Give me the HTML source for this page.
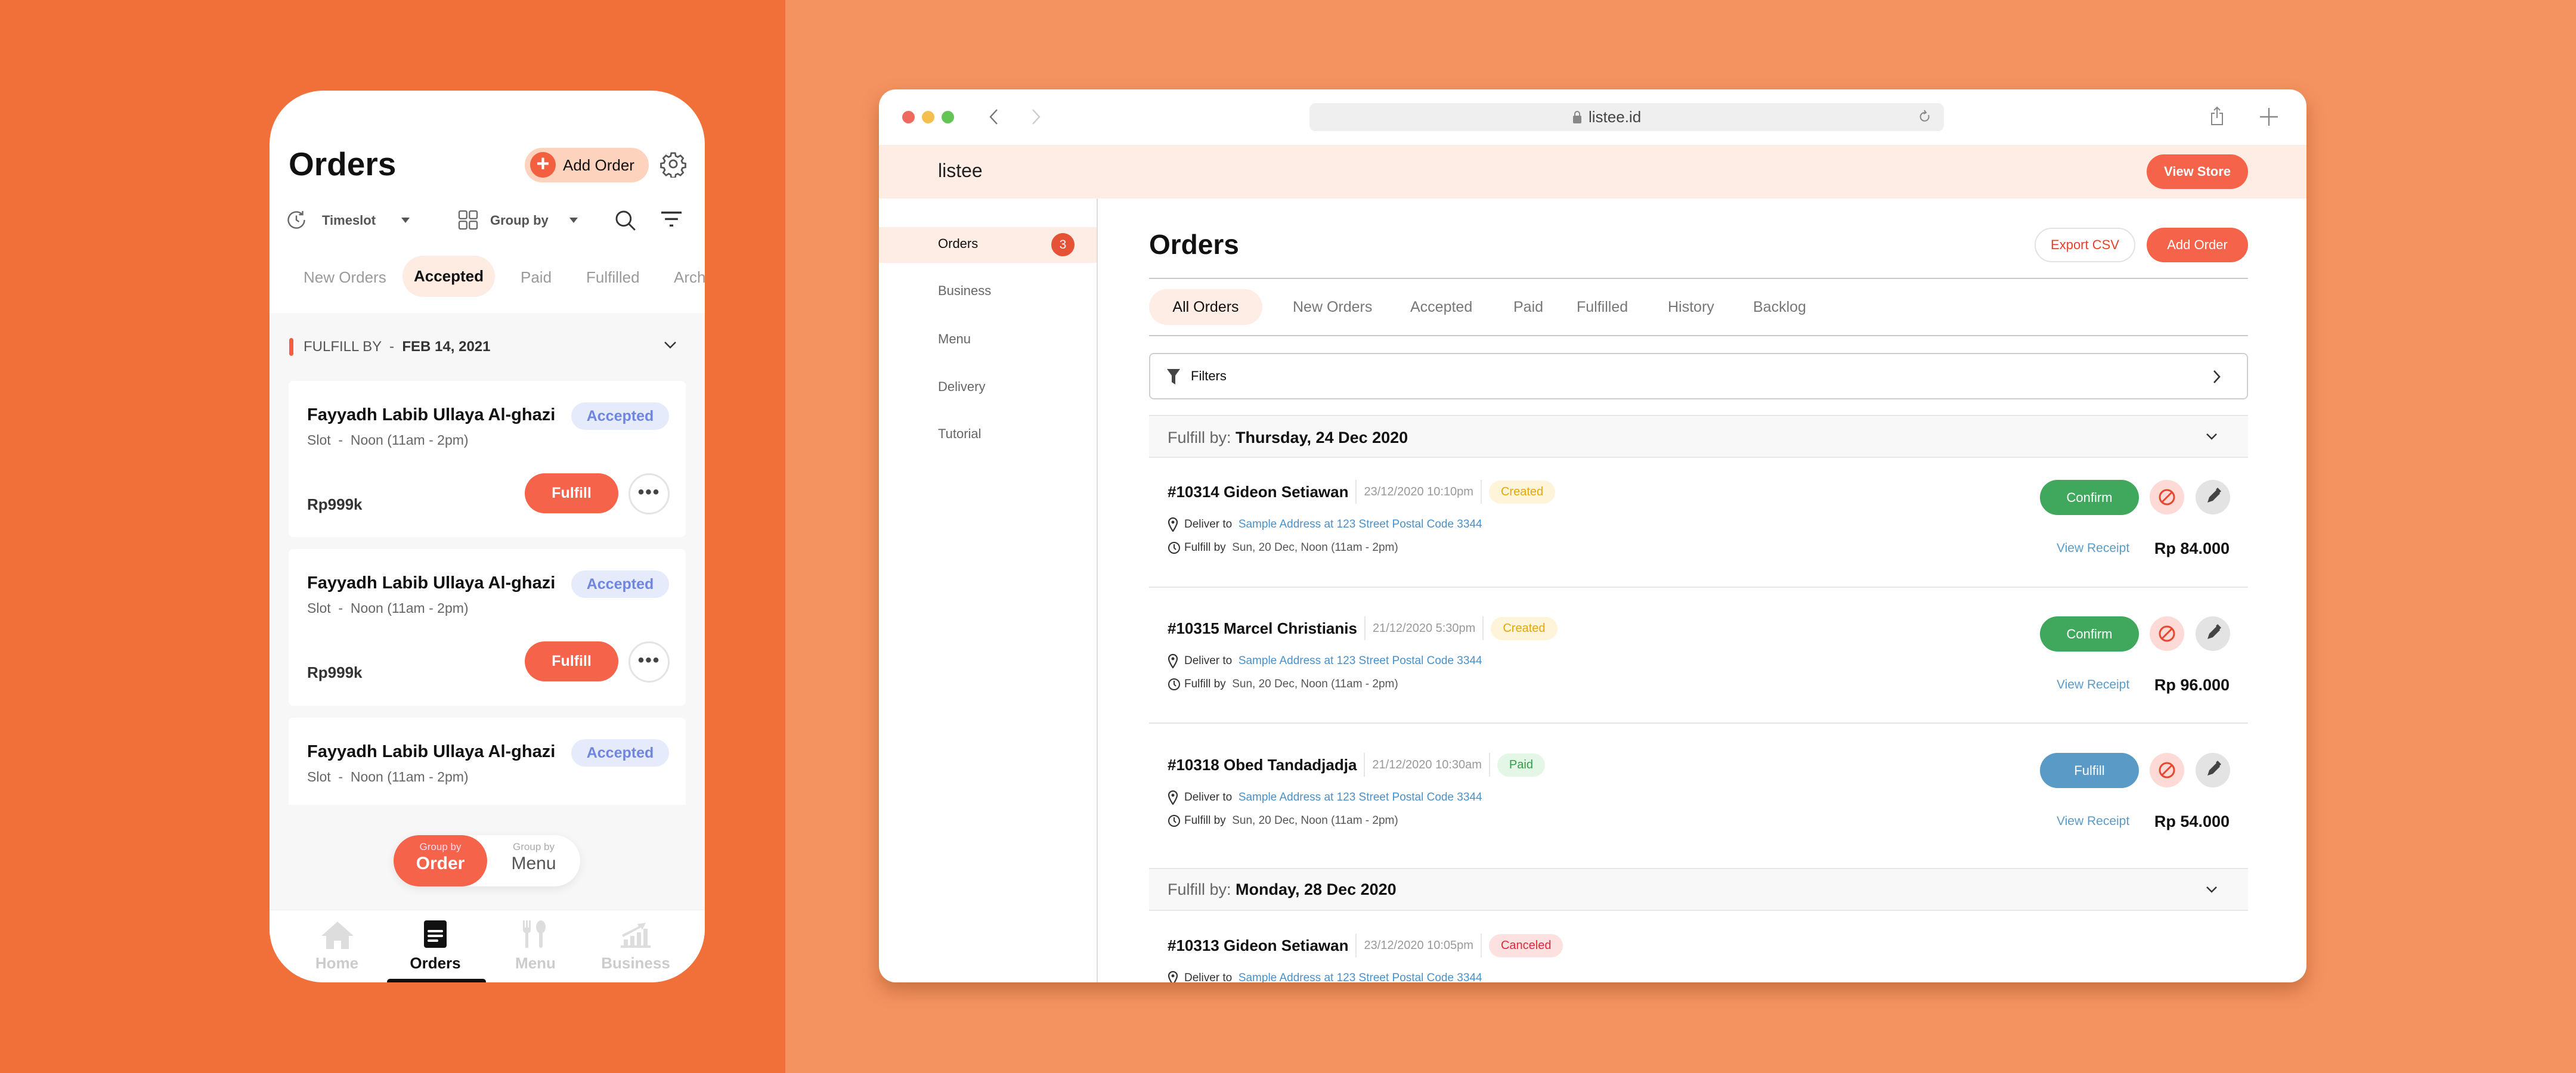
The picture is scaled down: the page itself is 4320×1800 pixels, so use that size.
<!DOCTYPE html>
<html><head><meta charset="utf-8"><style>
*{box-sizing:border-box;margin:0;padding:0}
body{width:4320px;height:1800px;position:relative;overflow:hidden;font-family:"Liberation Sans",sans-serif;background:#F49360}
.a{position:absolute}
.t{position:absolute;white-space:nowrap}
#left{left:0;top:0;width:1317px;height:1800px;background:#F1703A}
#phone{left:452px;top:152px;width:730px;height:1496px;border-radius:90px;background:#fff;overflow:hidden}
.card{position:absolute;left:32px;width:666px;background:#fff;border-radius:8px}
.badgeA{position:absolute;left:474px;top:36px;width:164px;height:46px;border-radius:23px;background:#E6EBFC;color:#6E86E0;font-size:25px;font-weight:600;text-align:center;line-height:46px}
.ful{position:absolute;left:396px;top:155px;width:157px;height:67px;border-radius:34px;background:#F4634A;color:#fff;font-size:25px;font-weight:700;text-align:center;line-height:67px}
.more{position:absolute;left:570px;top:155px;width:69px;height:69px;border-radius:50%;border:3px solid #e4e4e4;text-align:center;line-height:58px;font-size:30px;color:#444;letter-spacing:2px;font-weight:700}
#win{left:1474px;top:150px;width:2394px;height:1498px;border-radius:28px;background:#fff;overflow:hidden;box-shadow:0 14px 30px rgba(120,50,10,.35)}
.side{font-size:22px;color:#666;left:99px}
.tab{font-size:25px;color:#777;top:350px;line-height:30px}
.btnR{position:absolute;height:58px;border-radius:29px;background:#F4634A;color:#fff;font-size:22px;font-weight:600;text-align:center;line-height:58px}
.ord{position:absolute;left:453px;width:1843px}
.row{position:absolute;left:31px;display:flex;align-items:center;white-space:nowrap}
.ti{font-size:26px;font-weight:700;color:#111}
.dt{font-size:20px;color:#999;border-left:2px solid #e6e6e6;border-right:2px solid #e6e6e6;padding:0 12px;margin:0 12px;line-height:40px}
.bd{font-size:20px;padding:0 20px;height:39px;line-height:39px;border-radius:20px}
.sm{font-size:19px;color:#333}
.sm b{font-weight:400;color:#555}
.ad{color:#4A90C8}
.cbtn{position:absolute;left:1494px;width:166px;height:59px;border-radius:30px;color:#fff;font-size:22px;text-align:center;line-height:59px}
.cx{position:absolute;left:1678px;width:58px;height:58px;border-radius:50%;background:#FDDAD5}
.ed{position:absolute;left:1755px;width:58px;height:58px;border-radius:50%;background:#E3E3E3}
.vr{position:absolute;left:1522px;font-size:21px;color:#5B9BC8}
.pr{position:absolute;font-size:27px;font-weight:700;color:#111}
.gh{position:absolute;left:453px;width:1843px;height:72px;background:#F8F8F8;border-top:2px solid #e6e6e6;border-bottom:2px solid #e6e6e6}
.nav{position:absolute;top:1464px;transform:translate(-50%,-50%);font-size:26px;font-weight:700;color:#ccc}
</style></head><body>
<div class="a" id="left"></div>

<div class="a" id="phone">
 <div class="t" style="left:32px;top:90px;font-size:55px;font-weight:700;color:#111;line-height:66px">Orders</div>
 <div class="a" style="left:428px;top:96px;width:208px;height:58px;border-radius:29px;background:#FDD3BD"></div>
 <div class="a" style="left:437px;top:103px;width:43px;height:43px;border-radius:50%;background:#F2603F;color:#fff;text-align:center;line-height:41px;font-size:38px;font-weight:700">+</div>
 <div class="t" style="left:492px;top:107px;font-size:26px;color:#111;line-height:36px">Add Order</div>
 <svg class="a" style="left:654px;top:100px" width="46" height="46" viewBox="0 0 24 24" fill="none" stroke="#555" stroke-width="1.4"><circle cx="12" cy="12" r="3.2"/><path d="M10.3 2.5h3.4l.5 2.6 1.8.9 2.3-1.4 2.4 2.4-1.4 2.3.8 1.8 2.6.5v3.4l-2.6.5-.8 1.8 1.4 2.3-2.4 2.4-2.3-1.4-1.8.8-.5 2.6h-3.4l-.5-2.6-1.8-.8-2.3 1.4-2.4-2.4 1.4-2.3-.8-1.8-2.6-.5v-3.4l2.6-.5.8-1.8-1.4-2.3 2.4-2.4 2.3 1.4 1.8-.9z"/></svg>
 <svg class="a" style="left:27px;top:199px" width="36" height="36" viewBox="0 0 24 24" fill="none" stroke="#666" stroke-width="1.6"><path d="M21 12a9 9 0 1 1-3-6.7"/><path d="M19 2v4h-4" /><path d="M12 7v5l3 2"/></svg>
 <div class="t" style="left:88px;top:204px;font-size:22px;font-weight:600;color:#555;line-height:28px">Timeslot</div>
 <div class="a" style="left:221px;top:213px;border-left:7px solid transparent;border-right:7px solid transparent;border-top:9px solid #555"></div>
 <svg class="a" style="left:315px;top:199px" width="36" height="36" viewBox="0 0 24 24" fill="none" stroke="#666" stroke-width="1.5"><rect x="2" y="2" width="8.5" height="8.5" rx="1.5"/><rect x="13.5" y="2" width="8.5" height="8.5" rx="1.5"/><rect x="2" y="13.5" width="8.5" height="8.5" rx="1.5"/><rect x="13.5" y="13.5" width="8.5" height="8.5" rx="1.5"/></svg>
 <div class="t" style="left:370px;top:204px;font-size:22px;font-weight:600;color:#555;line-height:28px">Group by</div>
 <div class="a" style="left:503px;top:213px;border-left:7px solid transparent;border-right:7px solid transparent;border-top:9px solid #555"></div>
 <svg class="a" style="left:578px;top:199px" width="38" height="38" viewBox="0 0 24 24" fill="none" stroke="#333" stroke-width="1.8"><circle cx="10" cy="10" r="7.5"/><path d="M15.5 15.5L22 22"/></svg>
 <svg class="a" style="left:655px;top:200px" width="38" height="34" viewBox="0 0 24 22" fill="none" stroke="#333" stroke-width="2.2"><path d="M1 3h22M5 10h14M10 17h4"/></svg>
 <div class="t" style="left:57px;top:298px;font-size:26px;color:#9a9a9a;line-height:30px">New Orders</div>
 <div class="a" style="left:223px;top:277px;width:155px;height:69px;border-radius:35px;background:#FEEBE1;text-align:center;line-height:69px;font-size:26px;font-weight:700;color:#111">Accepted</div>
 <div class="t" style="left:421px;top:298px;font-size:26px;color:#9a9a9a;line-height:30px">Paid</div>
 <div class="t" style="left:531px;top:298px;font-size:26px;color:#9a9a9a;line-height:30px">Fulfilled</div>
 <div class="t" style="left:678px;top:298px;font-size:26px;color:#9a9a9a;line-height:30px">Archived</div>
 <div class="a" style="left:0;top:373px;width:730px;height:1001px;background:#F7F7F7"></div>
 <div class="a" style="left:33px;top:415px;width:7px;height:30px;border-radius:4px;background:#F2603F"></div>
 <div class="t" style="left:57px;top:416px;font-size:24px;color:#555;line-height:28px">FULFILL BY &nbsp;- &nbsp;<b style="color:#333">FEB 14, 2021</b></div>
 <svg class="a" style="left:661px;top:420px" width="22" height="14" viewBox="0 0 22 14" fill="none" stroke="#333" stroke-width="2.4"><path d="M2 2l9 9 9-9"/></svg>

 <div class="card" style="top:487px;height:262px">
  <div class="t" style="left:31px;top:40px;font-size:29px;font-weight:700;color:#111;line-height:34px">Fayyadh Labib Ullaya Al-ghazi</div>
  <div class="badgeA">Accepted</div>
  <div class="t" style="left:31px;top:85px;font-size:23px;color:#666;line-height:28px">Slot &nbsp;- &nbsp;Noon (11am - 2pm)</div>
  <div class="ful">Fulfill</div><div class="more">•••</div>
  <div class="t" style="left:31px;top:192px;font-size:26px;font-weight:700;color:#333;line-height:30px">Rp999k</div>
 </div>
 <div class="card" style="top:769px;height:263px">
  <div class="t" style="left:31px;top:40px;font-size:29px;font-weight:700;color:#111;line-height:34px">Fayyadh Labib Ullaya Al-ghazi</div>
  <div class="badgeA">Accepted</div>
  <div class="t" style="left:31px;top:85px;font-size:23px;color:#666;line-height:28px">Slot &nbsp;- &nbsp;Noon (11am - 2pm)</div>
  <div class="ful">Fulfill</div><div class="more">•••</div>
  <div class="t" style="left:31px;top:192px;font-size:26px;font-weight:700;color:#333;line-height:30px">Rp999k</div>
 </div>
 <div class="card" style="top:1052px;height:146px;border-radius:8px 8px 0 0">
  <div class="t" style="left:31px;top:40px;font-size:29px;font-weight:700;color:#111;line-height:34px">Fayyadh Labib Ullaya Al-ghazi</div>
  <div class="badgeA">Accepted</div>
  <div class="t" style="left:31px;top:85px;font-size:23px;color:#666;line-height:28px">Slot &nbsp;- &nbsp;Noon (11am - 2pm)</div>
 </div>
 <div class="a" style="left:208px;top:1249px;width:313px;height:86px;border-radius:43px;background:#fff;box-shadow:0 4px 14px rgba(0,0,0,.08)"></div>
 <div class="a" style="left:208px;top:1249px;width:157px;height:86px;border-radius:43px;background:#F4634A;color:#fff;text-align:center">
  <div style="font-size:17px;margin-top:10px;line-height:20px;color:#fde">Group by</div><div style="font-size:30px;line-height:36px;font-weight:600">Order</div></div>
 <div class="a" style="left:365px;top:1249px;width:156px;height:86px;text-align:center;color:#555">
  <div style="font-size:17px;margin-top:10px;line-height:20px;color:#aaa">Group by</div><div style="font-size:30px;line-height:36px">Menu</div></div>
 <div class="a" style="left:0;top:1374px;width:730px;height:122px;background:#fff;border-top:1px solid #eee"></div>
 <svg class="a" style="left:87px;top:1394px" width="54" height="46" viewBox="0 0 54 46" fill="#ddd"><path d="M27 0L54 24H46V46H33V32H21V46H8V24H0Z"/></svg>
 <svg class="a" style="left:259px;top:1392px" width="38" height="46" viewBox="0 0 38 46"><rect width="38" height="46" rx="4" fill="#111"/><path d="M8 18h22M8 26h22M8 34h14" stroke="#fff" stroke-width="4" stroke-linecap="round"/></svg>
 <svg class="a" style="left:424px;top:1392px" width="40" height="46" viewBox="0 0 40 46" fill="#ddd"><path d="M1 0h3v12h2V0h3v12h2V0h3v16c0 3-2 5-4 5v25H5V21c-2 0-4-2-4-5z"/><ellipse cx="31" cy="11" rx="8" ry="11"/><rect x="28" y="18" width="6" height="28" rx="3"/></svg>
 <svg class="a" style="left:589px;top:1392px" width="50" height="46" viewBox="0 0 50 46" fill="#ddd"><rect x="0" y="42" width="50" height="4"/><rect x="5" y="32" width="7" height="10"/><rect x="16" y="26" width="7" height="16"/><rect x="27" y="20" width="7" height="22"/><rect x="38" y="14" width="7" height="28"/><path d="M2 24L30 10l-2-4 14-2-6 12-2-4L4 28z"/></svg>
 <div class="nav" style="left:113px">Home</div>
 <div class="nav" style="left:278px;color:#111">Orders</div>
 <div class="nav" style="left:446px">Menu</div>
 <div class="nav" style="left:614px">Business</div>
 <div class="a" style="left:197px;top:1490px;width:166px;height:10px;border-radius:5px;background:#111"></div>
</div>

<div class="a" id="win">
 <div class="a" style="left:39px;top:36px;width:21px;height:21px;border-radius:50%;background:#EE6A5F"></div>
 <div class="a" style="left:72px;top:36px;width:21px;height:21px;border-radius:50%;background:#F5BE4F"></div>
 <div class="a" style="left:105px;top:36px;width:21px;height:21px;border-radius:50%;background:#62C554"></div>
 <svg class="a" style="left:184px;top:32px" width="16" height="28" viewBox="0 0 16 28" fill="none" stroke="#777" stroke-width="2.4"><path d="M14 2L3 14l11 12"/></svg>
 <svg class="a" style="left:256px;top:32px" width="16" height="28" viewBox="0 0 16 28" fill="none" stroke="#ccc" stroke-width="2.4"><path d="M2 2l11 12L2 26"/></svg>
 <div class="a" style="left:722px;top:23px;width:1064px;height:47px;border-radius:10px;background:#EFEFEF"></div>
 <svg class="a" style="left:1164px;top:35px" width="14" height="22" viewBox="0 0 14 22"><path d="M3 9V6a4 4 0 0 1 8 0v3" fill="none" stroke="#888" stroke-width="2"/><rect x="0" y="9" width="14" height="13" rx="2" fill="#888"/></svg>
 <div class="t" style="left:1190px;top:31px;font-size:26px;color:#444;line-height:30px">listee.id</div>
 <svg class="a" style="left:1744px;top:33px" width="20" height="26" viewBox="0 0 20 26" fill="none" stroke="#888" stroke-width="2"><path d="M16 10a7 7 0 1 1-5-4"/><path d="M9 2l3 4-4 2"/></svg>
 <svg class="a" style="left:2233px;top:28px" width="22" height="32" viewBox="0 0 22 32" fill="none" stroke="#888" stroke-width="2"><path d="M7 12H2v19h18V12h-5M11 20V2M6 7l5-5 5 5"/></svg>
 <svg class="a" style="left:2316px;top:31px" width="30" height="30" viewBox="0 0 30 30" stroke="#888" stroke-width="2.4"><path d="M15 0v30M0 15h30"/></svg>
 <div class="a" style="left:0;top:93px;width:2394px;height:90px;background:#FEEDE4"></div>
 <div class="t" style="left:99px;top:118px;font-size:32px;color:#222;line-height:36px">listee</div>
 <div class="btnR" style="left:2126px;top:109px;width:170px">View Store</div>
 <div class="a" style="left:365px;top:183px;width:2px;height:1315px;background:#ddd"></div>
 <div class="a" style="left:0;top:231px;width:365px;height:60px;background:#FEEDE4"></div>
 <div class="t side" style="top:246px;line-height:26px;color:#111">Orders</div>
 <div class="a" style="left:289px;top:241px;width:39px;height:39px;border-radius:50%;background:#E55337;color:#fff;text-align:center;line-height:39px;font-size:21px">3</div>
 <div class="t side" style="top:325px;line-height:26px">Business</div>
 <div class="t side" style="top:406px;line-height:26px">Menu</div>
 <div class="t side" style="top:486px;line-height:26px">Delivery</div>
 <div class="t side" style="top:565px;line-height:26px">Tutorial</div>
 <div class="t" style="left:453px;top:232px;font-size:46px;font-weight:700;color:#111;line-height:56px">Orders</div>
 <div class="a" style="left:1938px;top:232px;width:169px;height:58px;border-radius:29px;border:2px solid #e2e2e2;color:#E8412A;font-size:22px;text-align:center;line-height:54px">Export CSV</div>
 <div class="btnR" style="left:2126px;top:232px;width:170px;font-weight:400">Add Order</div>
 <div class="a" style="left:453px;top:316px;width:1843px;height:2px;background:#c9c9cd"></div>
 <div class="a" style="left:453px;top:335px;width:190px;height:60px;border-radius:30px;background:#FEEDE4;text-align:center;line-height:60px;font-size:25px;color:#111">All Orders</div>
 <div class="t tab" style="left:694px">New Orders</div>
 <div class="t tab" style="left:891px">Accepted</div>
 <div class="t tab" style="left:1064px">Paid</div>
 <div class="t tab" style="left:1170px">Fulfilled</div>
 <div class="t tab" style="left:1323px">History</div>
 <div class="t tab" style="left:1466px">Backlog</div>
 <div class="a" style="left:453px;top:412px;width:1843px;height:2px;background:#c9c9cd"></div>
 <div class="a" style="left:453px;top:442px;width:1843px;height:78px;border-radius:8px;border:2px solid #cfcfd3"></div>
 <svg class="a" style="left:483px;top:469px" width="22" height="26" viewBox="0 0 22 26" fill="#444"><path d="M0 0h22l-8 11v15l-6-4V11z"/></svg>
 <div class="t" style="left:523px;top:468px;font-size:22px;color:#111;line-height:26px">Filters</div>
 <svg class="a" style="left:2237px;top:470px" width="14" height="24" viewBox="0 0 14 24" fill="none" stroke="#333" stroke-width="2.6"><path d="M2 2l9 10-9 10"/></svg>

 <div class="gh" style="top:546px"><div class="t" style="left:31px;top:20px;font-size:27px;color:#666;line-height:32px">Fulfill by: <b style="color:#111">Thursday, 24 Dec 2020</b></div>
  <svg class="a" style="left:1772px;top:28px" width="20" height="12" viewBox="0 0 20 12" fill="none" stroke="#333" stroke-width="2.4"><path d="M2 2l8 8 8-8"/></svg></div>

 <div class="ord" style="top:655px;height:160px">
  <div class="row" style="top:0;height:40px"><span class="ti">#10314 Gideon Setiawan</span><span class="dt">23/12/2020 10:10pm</span><span class="bd" style="background:#FEF4DA;color:#E8A600">Created</span></div>
  <div class="row sm" style="top:62px;left:31px;height:26px"><svg width="18" height="24" viewBox="0 0 18 24"><path d="M9 1a7 7 0 0 1 7 7c0 5-7 15-7 15S2 13 2 8a7 7 0 0 1 7-7z" fill="#fff" stroke="#333" stroke-width="2.2"/><circle cx="9" cy="8" r="2.5" fill="#333"/></svg><span style="margin-left:10px">Deliver to &nbsp;<span class="ad">Sample Address at 123 Street Postal Code 3344</span></span></div>
  <div class="row sm" style="top:101px;height:26px"><svg width="22" height="22" viewBox="0 0 22 22" fill="none" stroke="#333" stroke-width="2"><circle cx="11" cy="11" r="9"/><path d="M11 5v6l3 3"/></svg><span style="margin-left:6px">Fulfill by &nbsp;<b>Sun, 20 Dec, Noon (11am - 2pm)</b></span></div>
  <div class="cbtn" style="top:0;background:#3FA85C">Confirm</div>
  <div class="cx" style="top:0"><svg width="58" height="58" viewBox="0 0 58 58" fill="none" stroke="#E5482E" stroke-width="3"><circle cx="29" cy="29" r="12"/><path d="M21 37l16-16"/></svg></div>
  <div class="ed" style="top:0"><svg width="58" height="58" viewBox="0 0 58 58"><path d="M20 38l3-9 12-12 6 6-12 12z M34 16l3-3 6 6-3 3z" fill="#444"/></svg></div>
  <div class="vr" style="top:102px;line-height:26px">View Receipt</div>
  <div class="pr" style="top:99px;line-height:32px;left:1650px;text-align:right;width:162px">Rp 84.000</div>
 </div>
 <div class="a" style="left:453px;top:834px;width:1843px;height:2px;background:#e6e6e6"></div>

 <div class="ord" style="top:884px;height:160px">
  <div class="row" style="top:0;height:40px"><span class="ti">#10315 Marcel Christianis</span><span class="dt">21/12/2020 5:30pm</span><span class="bd" style="background:#FEF4DA;color:#E8A600">Created</span></div>
  <div class="row sm" style="top:62px;left:31px;height:26px"><svg width="18" height="24" viewBox="0 0 18 24"><path d="M9 1a7 7 0 0 1 7 7c0 5-7 15-7 15S2 13 2 8a7 7 0 0 1 7-7z" fill="#fff" stroke="#333" stroke-width="2.2"/><circle cx="9" cy="8" r="2.5" fill="#333"/></svg><span style="margin-left:10px">Deliver to &nbsp;<span class="ad">Sample Address at 123 Street Postal Code 3344</span></span></div>
  <div class="row sm" style="top:101px;height:26px"><svg width="22" height="22" viewBox="0 0 22 22" fill="none" stroke="#333" stroke-width="2"><circle cx="11" cy="11" r="9"/><path d="M11 5v6l3 3"/></svg><span style="margin-left:6px">Fulfill by &nbsp;<b>Sun, 20 Dec, Noon (11am - 2pm)</b></span></div>
  <div class="cbtn" style="top:0;background:#3FA85C">Confirm</div>
  <div class="cx" style="top:0"><svg width="58" height="58" viewBox="0 0 58 58" fill="none" stroke="#E5482E" stroke-width="3"><circle cx="29" cy="29" r="12"/><path d="M21 37l16-16"/></svg></div>
  <div class="ed" style="top:0"><svg width="58" height="58" viewBox="0 0 58 58"><path d="M20 38l3-9 12-12 6 6-12 12z M34 16l3-3 6 6-3 3z" fill="#444"/></svg></div>
  <div class="vr" style="top:102px;line-height:26px">View Receipt</div>
  <div class="pr" style="top:99px;line-height:32px;left:1650px;text-align:right;width:162px">Rp 96.000</div>
 </div>
 <div class="a" style="left:453px;top:1062px;width:1843px;height:2px;background:#e6e6e6"></div>

 <div class="ord" style="top:1113px;height:160px">
  <div class="row" style="top:0;height:40px"><span class="ti">#10318 Obed Tandadjadja</span><span class="dt">21/12/2020 10:30am</span><span class="bd" style="background:#E4F7E6;color:#2E9E48">Paid</span></div>
  <div class="row sm" style="top:62px;left:31px;height:26px"><svg width="18" height="24" viewBox="0 0 18 24"><path d="M9 1a7 7 0 0 1 7 7c0 5-7 15-7 15S2 13 2 8a7 7 0 0 1 7-7z" fill="#fff" stroke="#333" stroke-width="2.2"/><circle cx="9" cy="8" r="2.5" fill="#333"/></svg><span style="margin-left:10px">Deliver to &nbsp;<span class="ad">Sample Address at 123 Street Postal Code 3344</span></span></div>
  <div class="row sm" style="top:101px;height:26px"><svg width="22" height="22" viewBox="0 0 22 22" fill="none" stroke="#333" stroke-width="2"><circle cx="11" cy="11" r="9"/><path d="M11 5v6l3 3"/></svg><span style="margin-left:6px">Fulfill by &nbsp;<b>Sun, 20 Dec, Noon (11am - 2pm)</b></span></div>
  <div class="cbtn" style="top:0;background:#5A9AC6">Fulfill</div>
  <div class="cx" style="top:0"><svg width="58" height="58" viewBox="0 0 58 58" fill="none" stroke="#E5482E" stroke-width="3"><circle cx="29" cy="29" r="12"/><path d="M21 37l16-16"/></svg></div>
  <div class="ed" style="top:0"><svg width="58" height="58" viewBox="0 0 58 58"><path d="M20 38l3-9 12-12 6 6-12 12z M34 16l3-3 6 6-3 3z" fill="#444"/></svg></div>
  <div class="vr" style="top:102px;line-height:26px">View Receipt</div>
  <div class="pr" style="top:99px;line-height:32px;left:1650px;text-align:right;width:162px">Rp 54.000</div>
 </div>

 <div class="gh" style="top:1306px"><div class="t" style="left:31px;top:18px;font-size:27px;color:#666;line-height:32px">Fulfill by: <b style="color:#111">Monday, 28 Dec 2020</b></div>
  <svg class="a" style="left:1772px;top:28px" width="20" height="12" viewBox="0 0 20 12" fill="none" stroke="#333" stroke-width="2.4"><path d="M2 2l8 8 8-8"/></svg></div>

 <div class="ord" style="top:1416px;height:100px">
  <div class="row" style="top:0;height:40px"><span class="ti">#10313 Gideon Setiawan</span><span class="dt">23/12/2020 10:05pm</span><span class="bd" style="background:#FDE1E1;color:#E0283A">Canceled</span></div>
  <div class="row sm" style="top:62px;left:31px;height:26px"><svg width="18" height="24" viewBox="0 0 18 24"><path d="M9 1a7 7 0 0 1 7 7c0 5-7 15-7 15S2 13 2 8a7 7 0 0 1 7-7z" fill="#fff" stroke="#333" stroke-width="2.2"/><circle cx="9" cy="8" r="2.5" fill="#333"/></svg><span style="margin-left:10px">Deliver to &nbsp;<span class="ad">Sample Address at 123 Street Postal Code 3344</span></span></div>
 </div>
</div>
</body></html>
